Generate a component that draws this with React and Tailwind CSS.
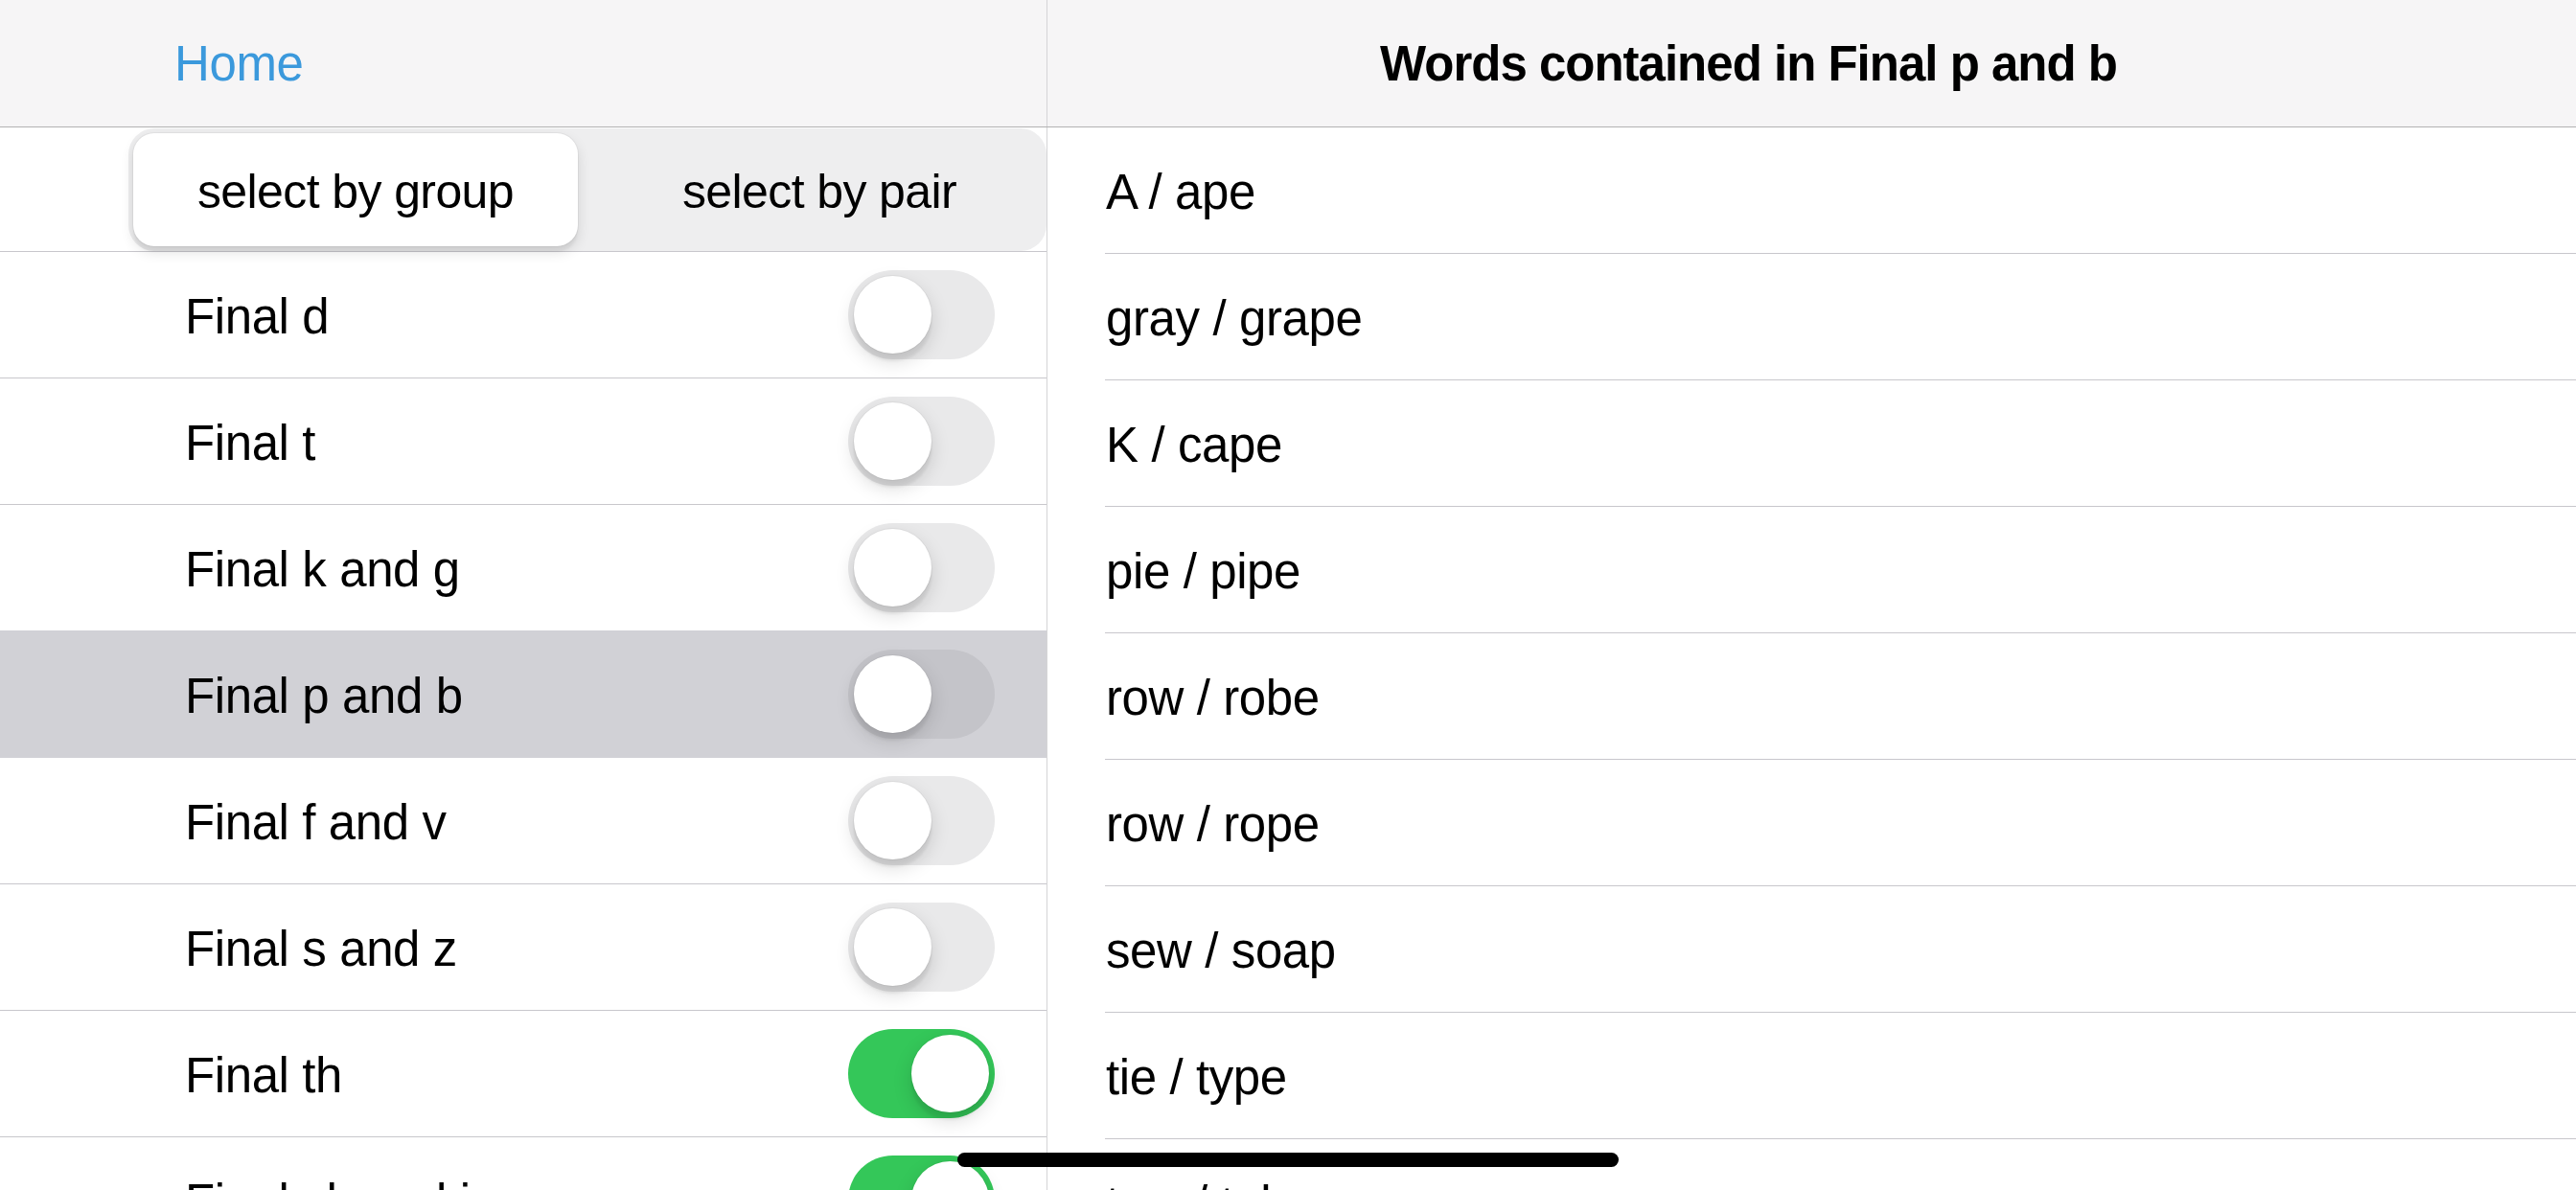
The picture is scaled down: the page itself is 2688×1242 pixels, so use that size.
import { useState } from "react";

const GROUPS = [
  { name: "Final d", on: false },
  { name: "Final t", on: false },
  { name: "Final k and g", on: false },
  { name: "Final p and b", on: false },
  { name: "Final f and v", on: false },
  { name: "Final s and z", on: false },
  { name: "Final th", on: true },
  { name: "Final ch and j", on: true },
];

const WORDS = [
  "A / ape",
  "gray / grape",
  "K / cape",
  "pie / pipe",
  "row / robe",
  "row / rope",
  "sew / soap",
  "tie / type",
  "two / tube",
];

function Toggle({ on, dim }) {
  const track = on ? "bg-[#34c759] justify-end" : dim ? "bg-[#c4c4c9] justify-start" : "bg-[#e9e9ea] justify-start";
  return (
    <div className={`flex items-center w-[153px] h-[93px] rounded-full p-[6px] ${track}`}>
      <div className="w-[81px] h-[81px] rounded-full bg-white shadow-[0_0_0_1px_rgba(0,0,0,0.04),0_8px_20px_rgba(0,0,0,0.15),0_8px_3px_rgba(0,0,0,0.06)]" />
    </div>
  );
}

const SELECTED_SEG =
  "bg-white shadow-[0_0_0_1px_rgba(0,0,0,0.04),0_6px_14px_rgba(0,0,0,0.12),0_6px_2px_rgba(0,0,0,0.04)]";

export default function App() {
  const [mode, setMode] = useState("group");
  const selected = "Final p and b";

  return (
    <div
      className="relative w-[2688px] h-[1242px] overflow-hidden bg-white text-black"
      style={{ fontFamily: '"Liberation Sans", Arial, sans-serif' }}
    >
      {/* nav bar */}
      <div className="flex h-[133px] bg-[#f6f5f6] border-b border-[#b2b2b2]">
        <div className="w-[1092px] flex items-center pl-[182px] pt-[3px]">
          <span className="text-[51px] tracking-[-0.4px] text-[#3b99dc]">Home</span>
        </div>
        <div className="flex-1 flex items-center justify-center border-l border-[#d4d4d6] pr-[132px] pt-[3px]">
          <span className="text-[51px] font-bold tracking-[-1px]">Words contained in Final p and b</span>
        </div>
      </div>

      <div className="flex">
        {/* left: groups */}
        <div className="w-[1092px] shrink-0">
          <div className="h-[130px] border-b border-[#c8c7cc] pl-[134px] pt-[1px]">
            <div className="flex h-full rounded-[27px] bg-[#eeeeef] p-[5px]">
              <div className="flex-1 flex pr-[10px]">
                <button
                  onClick={() => setMode("group")}
                  className={`flex-1 flex items-center justify-center pt-[4px] rounded-[22px] text-[50px] tracking-[-0.6px] ${
                    mode === "group" ? SELECTED_SEG : ""
                  }`}
                >
                  select by group
                </button>
              </div>
              <div className="flex-1 flex pl-[10px]">
                <button
                  onClick={() => setMode("pair")}
                  className={`flex-1 flex items-center justify-center pt-[4px] rounded-[22px] text-[50px] tracking-[-0.6px] ${
                    mode === "pair" ? SELECTED_SEG : ""
                  }`}
                >
                  select by pair
                </button>
              </div>
            </div>
          </div>

          {GROUPS.map((g) => {
            const active = g.name === selected;
            return (
              <div
                key={g.name}
                className={`flex items-center justify-between border-b pl-[193px] pr-[54px] ${
                  active ? "bg-[#d1d1d6] border-[#d1d1d6] -mt-[1px] h-[133px]" : "h-[132px] border-[#c8c7cc]"
                }`}
              >
                <span className="text-[51px] tracking-[-0.4px] pt-[6px]">{g.name}</span>
                <Toggle on={g.on} dim={active} />
              </div>
            );
          })}
        </div>

        {/* right: words */}
        <div className="flex-1 border-l border-[#d4d4d6]">
          {WORDS.map((w, i) => (
            <div key={i} className="ml-[60px] h-[132px] border-b border-[#c8c7cc] flex items-center pl-[1px]">
              <span className="text-[51px] tracking-[-0.4px] pt-[6px]">{w}</span>
            </div>
          ))}
        </div>
      </div>

      {/* home indicator */}
      <div className="absolute left-[999px] top-[1203px] w-[690px] h-[15px] rounded-full bg-black" />
    </div>
  );
}
